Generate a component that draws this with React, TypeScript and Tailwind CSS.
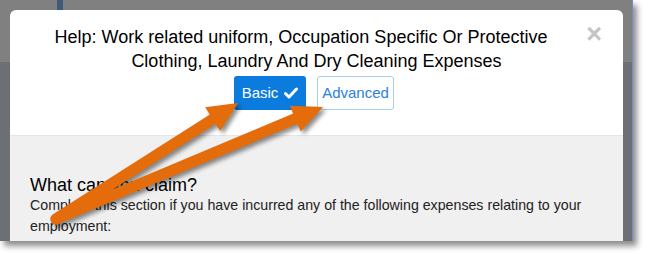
const Arrow = ({ x1, y1, x2, y2 }: { x1: number; y1: number; x2: number; y2: number }) => {
  const dx = x2 - x1;
  const dy = y2 - y1;
  const len = Math.sqrt(dx * dx + dy * dy);
  const ux = dx / len;
  const uy = dy / len;
  const head = 30;
  const half = 14;
  const bx = x2 - ux * head;
  const by = y2 - uy * head;
  const px = -uy;
  const py = ux;
  return (
    <g>
      <line x1={x1} y1={y1} x2={bx + ux * 2} y2={by + uy * 2} stroke="#e46c0a" strokeWidth={11} strokeLinecap="round" />
      <polygon
        points={`${x2},${y2} ${bx + px * half},${by + py * half} ${bx - px * half},${by - py * half}`}
        fill="#e46c0a"
      />
    </g>
  );
};

export default function App() {
  return (
    <div className="w-[649px] h-[257px] bg-white relative overflow-hidden" style={{ fontFamily: '"Liberation Sans", Arial, sans-serif' }}>
      {/* screenshot */}
      <div className="relative w-[633px] h-[241px] bg-[#6c7074] shadow-[4px_5px_6px_rgba(0,0,0,0.45)] overflow-hidden">
        <div className="absolute inset-x-0 top-0 h-[62px] bg-[#808080]" />
        <div className="absolute left-[57px] top-0 w-[6px] h-[10px] bg-[#3f5a78]" />
        <div className="absolute right-0 top-0 bottom-0 w-px bg-[#6d8fd0]" />

        {/* modal */}
        <div className="absolute left-[10px] top-[10px] w-[613px] h-[240px] rounded-t-[6px] overflow-hidden flex flex-col">
          <div className="relative h-[126px] bg-white border-b border-[#e5e5e5] flex flex-col items-center">
            <div className="mt-[15px] text-[18px] leading-[24px] text-black text-center">
              <div className="pr-[31px]">Help: Work related uniform, Occupation Specific Or Protective</div>
              <div>Clothing, Laundry And Dry Cleaning Expenses</div>
            </div>
            <div className="mt-[3px] flex gap-[11px] pr-[5px]">
              <button className="h-[34px] w-[72px] rounded-[3px] bg-[#0b7bdd] text-white text-[15px] flex items-center justify-center gap-[6px]">
                Basic
                <svg width="14" height="12" viewBox="0 0 14 12">
                  <path d="M1.5 6.5 L5 10 L12.5 2" fill="none" stroke="white" strokeWidth="3" strokeLinecap="round" strokeLinejoin="round" />
                </svg>
              </button>
              <button className="h-[34px] w-[77px] rounded-[3px] bg-white border border-[#a9cdf2] text-[#2c7fdc] text-[15px] flex items-center justify-center">
                Advanced
              </button>
            </div>
            <div className="absolute right-[21px] top-[11px] text-[27px] leading-none font-bold text-[#c4c4c4]">×</div>
          </div>
          <div className="flex-1 bg-[#f0f0f0] px-[20px] pt-[39px]">
            <div className="text-[18px] leading-[20px] text-black">What can you claim?</div>
            <div className="text-[14.2px] leading-[21px] text-[#222]">
              Complete this section if you have incurred any of the following expenses relating to your employment:
            </div>
          </div>
        </div>
      </div>

      {/* arrows */}
      <svg className="absolute left-0 top-0" width="649" height="257" style={{ filter: "drop-shadow(3px 3px 2px rgba(0,0,0,0.45))" }}>
        <Arrow x1={56} y1={219} x2={238} y2={103} />
        <Arrow x1={56} y1={219} x2={323} y2={107} />
      </svg>
    </div>
  );
}
